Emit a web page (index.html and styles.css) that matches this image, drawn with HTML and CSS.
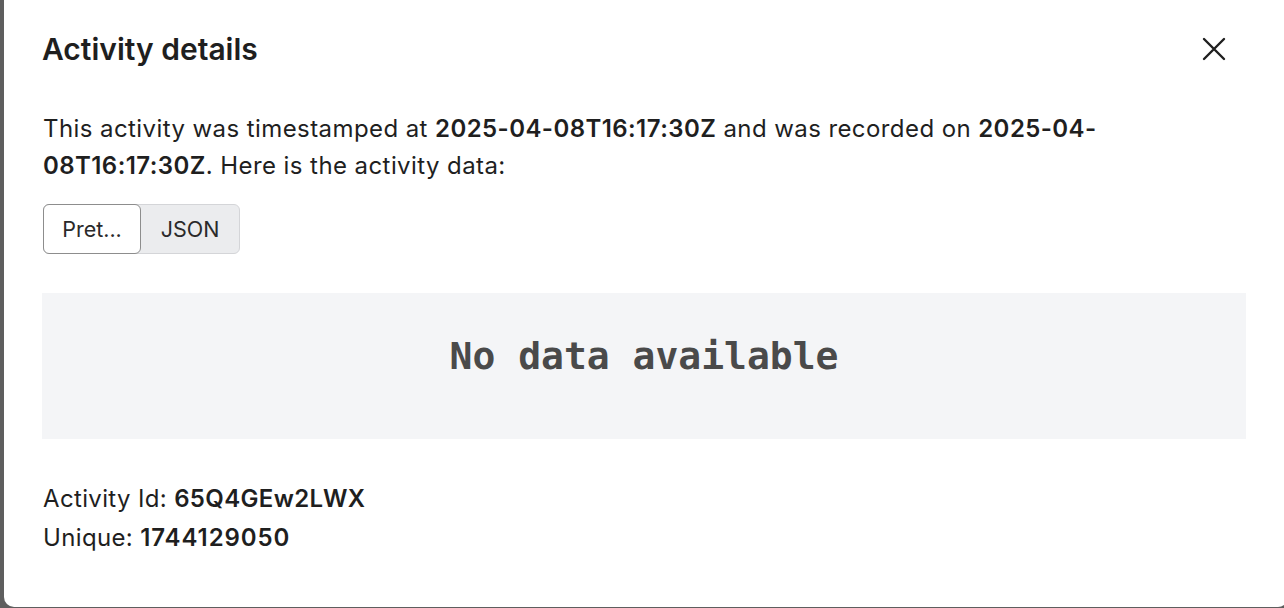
FILE: index.html
```html
<!DOCTYPE html>
<html lang="en">
<head>
    <meta charset="UTF-8">
    <meta name="viewport" content="width=device-width, initial-scale=1.0">
    <title>Activity details</title>
    <link rel="stylesheet" href="styles.css">
</head>
<body>
    <div class="backdrop">
        <div class="modal">
            <div class="modal-header">
                <h2 class="modal-title">Activity details</h2>
                <button class="close-button" aria-label="Close">
                    <svg width="24" height="24" viewBox="0 0 24 24" fill="none" stroke="#1f1f1f" stroke-width="2.4" stroke-linecap="round">
                        <path d="M2 2L22 22M22 2L2 22"/>
                    </svg>
                </button>
            </div>
            <p class="summary">
                This activity was timestamped at <strong>2025-04-08T16:17:30Z</strong> and was recorded on <strong>2025-04-<wbr>08T16:17:30Z</strong>. Here is the activity data:
            </p>
            <div class="toggle">
                <button class="toggle-item active">Pret...</button>
                <button class="toggle-item">JSON</button>
            </div>
            <div class="data-box">
                <span class="no-data">No data available</span>
            </div>
            <div class="meta">
                <div>Activity Id: <strong>65Q4GEw2LWX</strong></div>
                <div>Unique: <strong class="num">1744129050</strong></div>
            </div>
        </div>
    </div>
</body>
</html>
```

FILE: styles.css
```css
body {
    margin: 0;
    overflow: hidden;
    font-family: Inter, "Noto Sans", Arial, sans-serif;
    color: #1f1f1f;
    background-color: #5e5e5e;
}
.backdrop {
    width: 1284px;
    height: 608px;
    overflow: hidden;
}
.modal {
    margin-left: 4px;
    width: 1284px;
    height: 607px;
    box-sizing: border-box;
    background-color: #fff;
    border-radius: 0 0 10px 10px;
    padding: 26px 38px 0 38px;
}
.modal-header {
    display: flex;
    align-items: center;
    justify-content: space-between;
    width: 1204px;
}
.modal-title {
    margin: 0;
    font-size: 30px;
    font-weight: 600;
    line-height: 46px;
}
.close-button {
    width: 44px;
    height: 44px;
    margin-right: 10px;
    padding: 0;
    border: none;
    background: none;
    display: flex;
    align-items: center;
    justify-content: center;
    cursor: pointer;
}
.summary {
    width: 1204px;
    margin: 38px 0 0 1px;
    font-size: 24px;
    line-height: 37px;
    letter-spacing: 0.42px;
}
.summary strong, .meta strong {
    font-weight: 600;
}
.toggle {
    display: inline-flex;
    margin-top: 20px;
    margin-left: 1px;
    border: 1px solid #d4d5d8;
    border-radius: 6px;
    background-color: #ebecee;
}
.toggle-item {
    font-family: Inter, "Noto Sans", Arial, sans-serif;
    font-size: 21.5px;
    color: #2a2a2a;
    height: 48px;
    width: 98px;
    padding: 0;
    border: none;
    background: none;
    cursor: pointer;
}
.toggle-item.active {
    margin: -1px 0 -1px -1px;
    height: 50px;
    background-color: #fff;
    border: 1px solid #8d8d8d;
    border-radius: 6px;
}
.data-box {
    margin-top: 39px;
    width: 1204px;
    height: 146px;
    box-sizing: border-box;
    padding-bottom: 20px;
    background-color: #f4f5f7;
    display: flex;
    align-items: center;
    justify-content: center;
}
.no-data {
    font-family: "DejaVu Sans Mono", "Liberation Mono", monospace;
    font-weight: bold;
    font-size: 38px;
    color: #4a4a4a;
}
.meta {
    margin-top: 40px;
    margin-left: 1px;
    font-size: 24px;
    line-height: 39px;
    letter-spacing: 0.35px;
}
.meta .num {
    letter-spacing: 0.9px;
}
```
